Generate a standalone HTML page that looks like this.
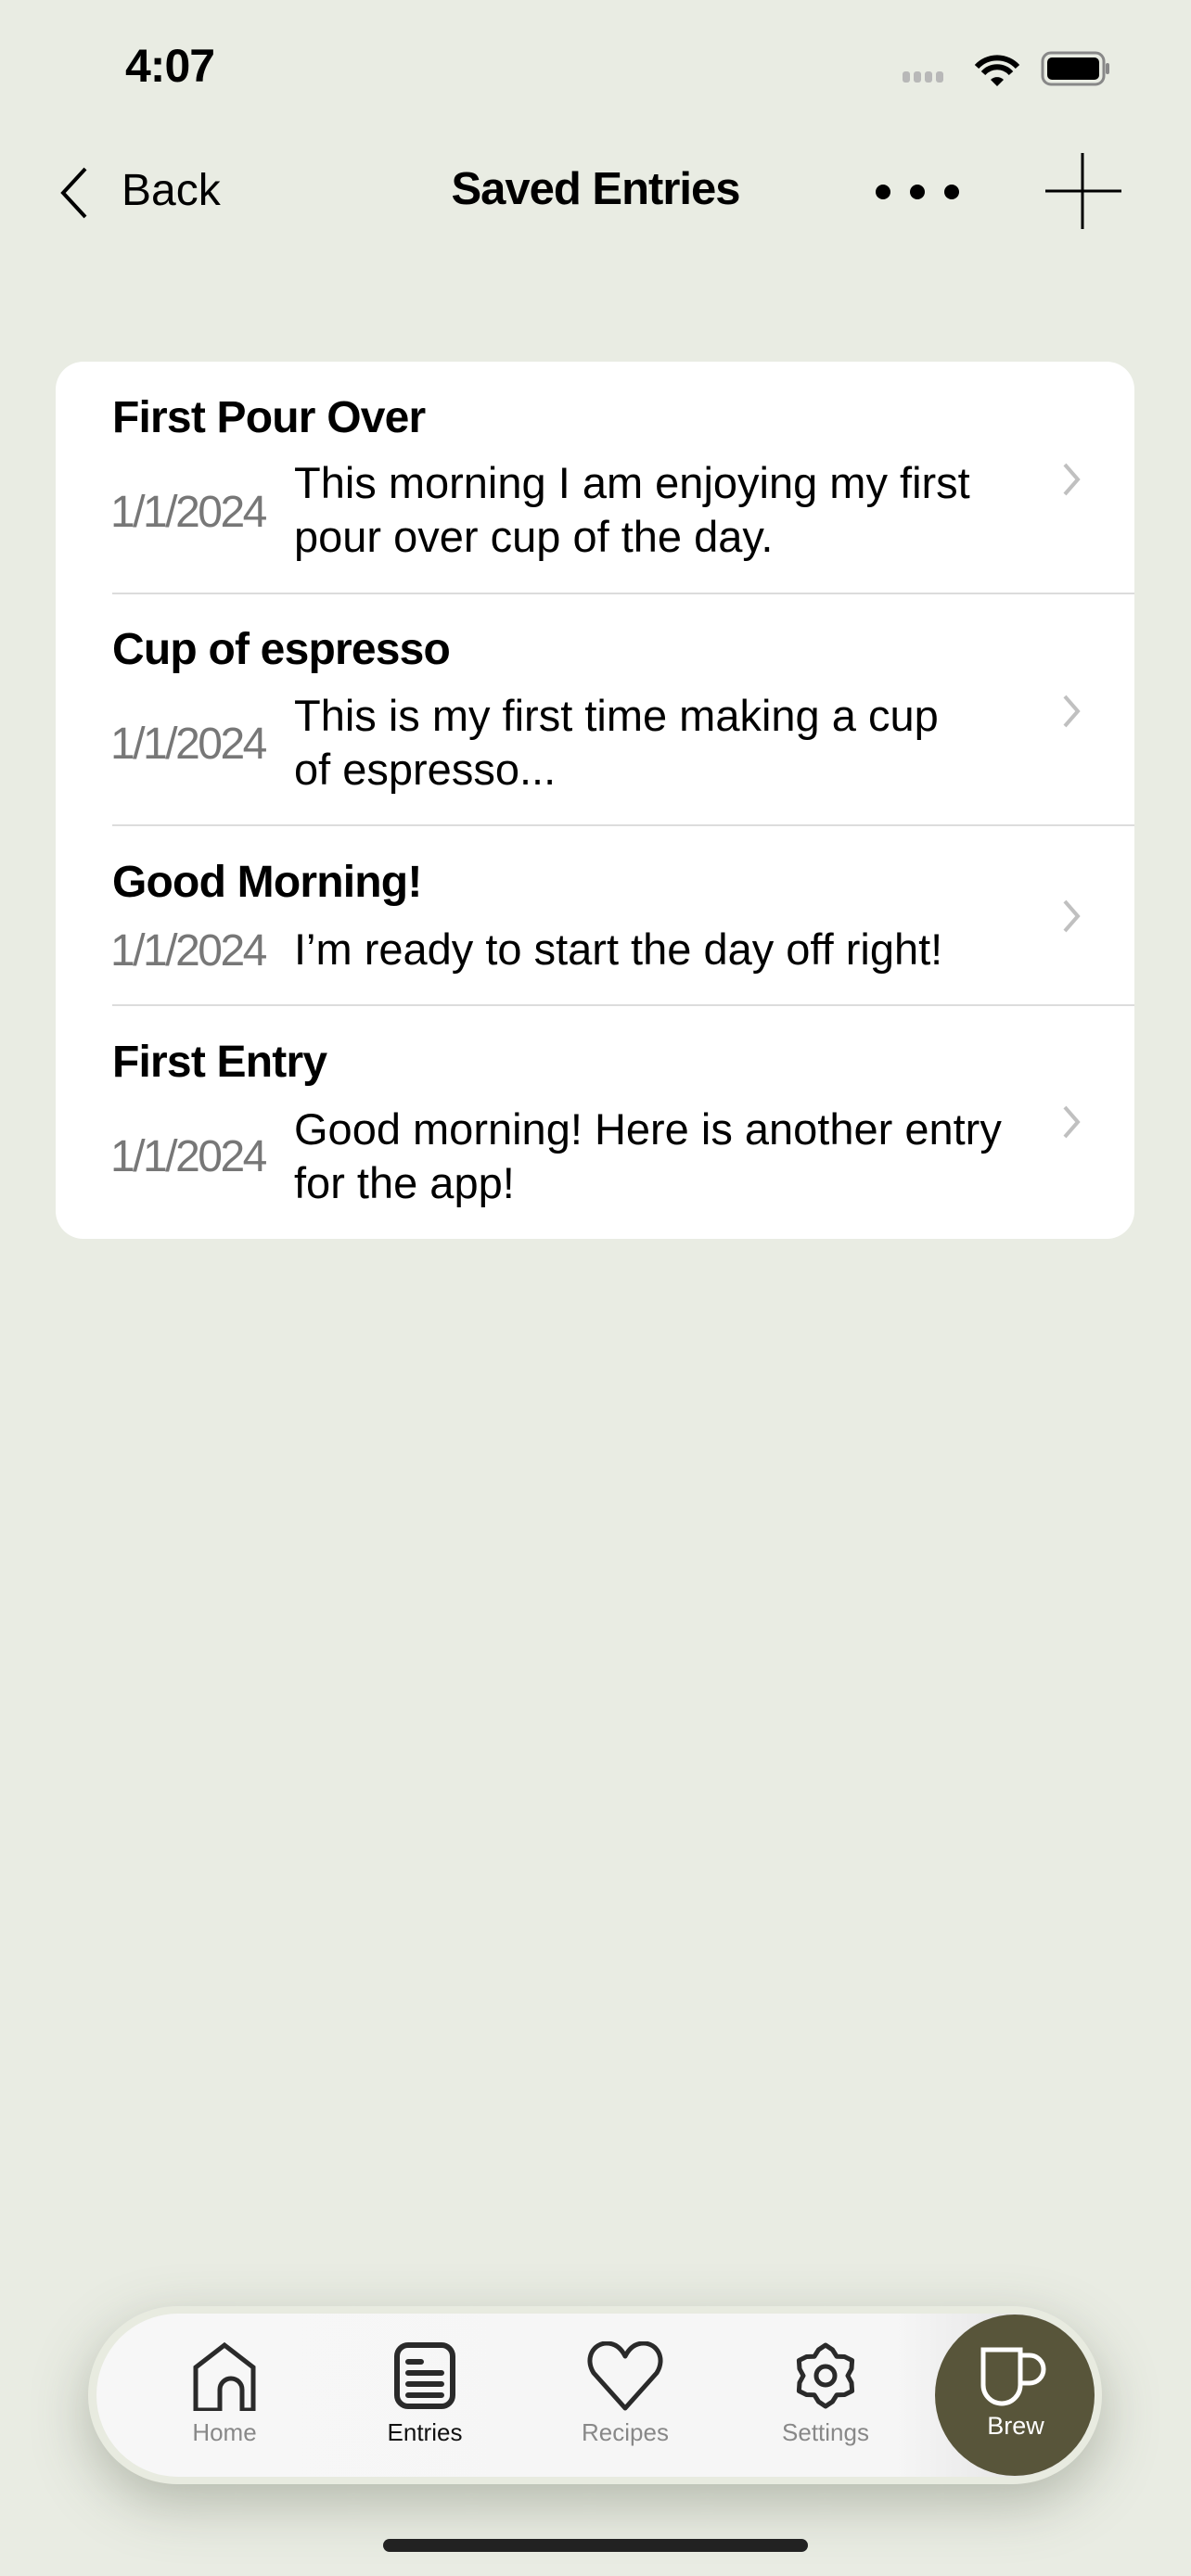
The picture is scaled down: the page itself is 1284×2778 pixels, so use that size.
<!DOCTYPE html>
<html><head><style>
*{margin:0;padding:0;box-sizing:border-box}
body{width:1284px;height:2778px;background:#e9ece3;font-family:"Liberation Sans",sans-serif;position:relative;overflow:hidden;color:#000}
.a{position:absolute;white-space:nowrap}
.t{font-weight:bold;font-size:48px;letter-spacing:-0.8px;left:121px}
.d{font-size:48px;color:#777;font-weight:300;left:119px;letter-spacing:-2.5px}
.b{font-size:47px;left:317px;letter-spacing:0;line-height:58px}
.sep{position:absolute;left:121px;right:61px;height:2px;background:#dcdcdc}
.chev{position:absolute;left:1140px}
.lab{position:absolute;font-size:26px;color:#888;text-align:center;width:160px}
</style></head><body>
<div class="a" style="left:135px;top:42px;font-size:50px;font-weight:bold;letter-spacing:-1px">4:07</div>
<svg class="a" style="left:970px;top:55px" width="230" height="40" viewBox="0 0 230 40">
<g fill="#b8b8b8"><rect x="3" y="22" width="8" height="12" rx="3"/><rect x="15" y="22" width="8" height="12" rx="3"/><rect x="27" y="22" width="8" height="12" rx="3"/><rect x="39" y="22" width="8" height="12" rx="3"/></g>
<path d="M83 17a30 30 0 0 1 44 0" stroke="#000" stroke-width="6" fill="none"/><path d="M90 24a20 20 0 0 1 30 0" stroke="#000" stroke-width="6" fill="none"/><path d="M98 31l7 7 7-7a10 10 0 0 0-14 0z" fill="#000"/>
<rect x="154" y="2" width="66" height="34" rx="9" fill="none" stroke="#888" stroke-width="3"/><rect x="159" y="7" width="56" height="24" rx="5" fill="#000"/><rect x="222" y="13" width="4" height="12" rx="2" fill="#888"/>
</svg>
<svg class="a" style="left:60px;top:178px" width="40" height="60"><path d="M32 4L8 30l24 26" stroke="#000" stroke-width="4" fill="none"/></svg>
<div class="a" style="left:131px;top:178px;font-size:48px;font-weight:300">Back</div>
<div class="a" style="left:442px;width:400px;text-align:center;top:176px;font-size:49px;font-weight:bold;letter-spacing:-1px">Saved Entries</div>
<svg class="a" style="left:940px;top:195px" width="100" height="24"><circle cx="12" cy="12" r="8"/><circle cx="49" cy="12" r="8"/><circle cx="86" cy="12" r="8"/></svg>
<svg class="a" style="left:1125px;top:163px" width="86" height="86"><path d="M42 2v82M2 43h82" stroke="#000" stroke-width="3"/></svg>

<div class="a" style="left:60px;top:390px;width:1163px;height:946px;background:#fff;border-radius:30px"></div>

<div class="a t" style="top:423px">First Pour Over</div>
<div class="a d" style="top:525px">1/1/2024</div>
<div class="a b" style="top:492px">This morning I am enjoying my first<br>pour over cup of the day.</div>
<svg class="chev" style="top:495px" width="30" height="45"><path d="M8 6l14 16-14 16" stroke="#c0c0c0" stroke-width="4" fill="none"/></svg>
<div class="sep" style="top:639px"></div>

<div class="a t" style="top:673px">Cup of espresso</div>
<div class="a d" style="top:775px">1/1/2024</div>
<div class="a b" style="top:743px">This is my first time making a cup<br>of espresso...</div>
<svg class="chev" style="top:745px" width="30" height="45"><path d="M8 6l14 16-14 16" stroke="#c0c0c0" stroke-width="4" fill="none"/></svg>
<div class="sep" style="top:889px"></div>

<div class="a t" style="top:924px">Good Morning!</div>
<div class="a d" style="top:998px">1/1/2024</div>
<div class="a b" style="top:995px">I’m ready to start the day off right!</div>
<svg class="chev" style="top:966px" width="30" height="45"><path d="M8 6l14 16-14 16" stroke="#c0c0c0" stroke-width="4" fill="none"/></svg>
<div class="sep" style="top:1083px"></div>

<div class="a t" style="top:1118px">First Entry</div>
<div class="a d" style="top:1220px">1/1/2024</div>
<div class="a b" style="top:1189px">Good morning! Here is another entry<br>for the app!</div>
<svg class="chev" style="top:1188px" width="30" height="45"><path d="M8 6l14 16-14 16" stroke="#c0c0c0" stroke-width="4" fill="none"/></svg>

<div class="a" style="left:95px;top:2487px;width:1093px;height:192px;border-radius:96px;background:#e8ebe0;box-shadow:0 20px 60px rgba(80,90,70,0.35)"></div>
<div class="a" style="left:104px;top:2495px;width:1076px;height:176px;border-radius:88px;background:linear-gradient(90deg,#f7f7f7 0%,#f6f6f6 80%,#dcdcdc 100%)"></div>
<div class="a" style="left:1008px;top:2496px;width:172px;height:174px;border-radius:50%;background:#58553a"></div>
<svg class="a" style="left:1050px;top:2530px" width="92" height="70"><path d="M10 4h40v38a20 20 0 0 1-40 0z" stroke="#fff" stroke-width="5" fill="none"/><path d="M50 10h10a9 9 0 0 1 0 30h-10" stroke="#fff" stroke-width="5" fill="none"/></svg>
<div class="lab" style="left:1015px;top:2601px;color:#fff;font-size:27px">Brew</div>

<svg class="a" style="left:205px;top:2525px" width="75" height="75"><path d="M6 70V24L37 -0L68 24V70H56V48a12 12 0 0 0-24 0V70H6z" transform="translate(0,4)" stroke="#2a2a2a" stroke-width="5" fill="none" stroke-linejoin="miter"/></svg>
<div class="lab" style="left:162px;top:2608px">Home</div>

<svg class="a" style="left:424px;top:2525px" width="70" height="75"><rect x="4" y="4" width="60" height="66" rx="12" stroke="#2a2a2a" stroke-width="6" fill="none"/><g stroke="#2a2a2a" stroke-width="6" stroke-linecap="round"><path d="M16 22h14M16 34h36M16 46h36M16 58h36"/></g></svg>
<div class="lab" style="left:378px;top:2608px;color:#111">Entries</div>

<svg class="a" style="left:632px;top:2525px" width="84" height="75"><path d="M42 72L8 34C-2 18 8 2 22 2c10 0 16 6 20 14C46 8 52 2 62 2c14 0 24 16 14 32z" stroke="#2a2a2a" stroke-width="5" fill="none" stroke-linejoin="round"/></svg>
<div class="lab" style="left:594px;top:2608px">Recipes</div>

<svg class="a" style="left:852px;top:2522px" width="76" height="80"><polygon points="38,7 45.5,12 50,19.2 58.5,19.5 66.6,23.5 66,32.5 62,40 66,47.5 66.6,56.5 58.5,60.5 50,60.8 45.5,68 38,73 30.5,68 26,60.8 17.5,60.5 9.4,56.5 10,47.5 14,40 10,32.5 9.4,23.5 17.5,19.5 26,19.2 30.5,12" stroke="#2a2a2a" stroke-width="5" fill="none" stroke-linejoin="round"/><circle cx="38" cy="40" r="10" stroke="#2a2a2a" stroke-width="5" fill="none"/></svg>
<div class="lab" style="left:810px;top:2608px">Settings</div>

<div class="a" style="left:413px;top:2738px;width:458px;height:14px;border-radius:7px;background:#222"></div>
</body></html>
